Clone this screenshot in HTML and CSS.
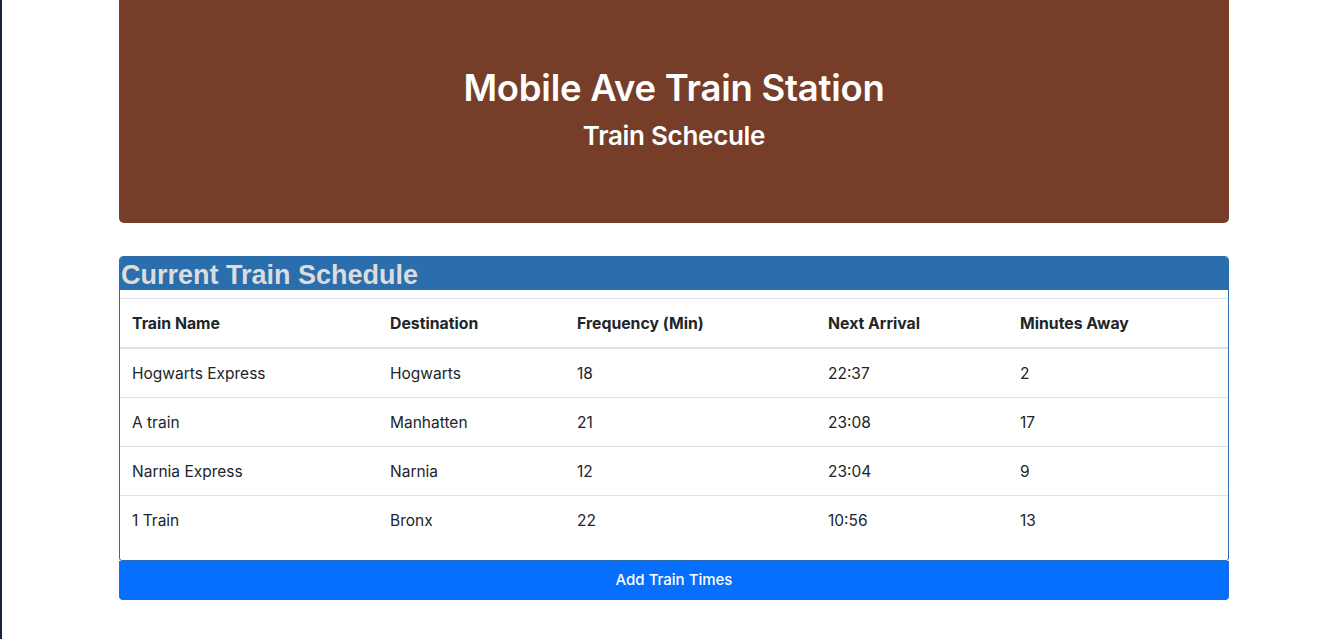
FILE: index.html
```html
<!DOCTYPE html>
<html lang="en">
<head>
<meta charset="utf-8">
<title>Mobile Ave Train Station</title>
<link rel="stylesheet" href="styles.css">
</head>
<body>
<div class="container">
  <header class="jumbotron">
    <h1 class="title">Mobile Ave Train Station</h1>
    <h4 class="subtitle">Train Schecule</h4>
  </header>

  <section class="card">
    <h3 class="card-header">Current Train Schedule</h3>
    <table class="table">
      <thead>
        <tr>
          <th class="c1">Train Name</th>
          <th class="c2">Destination</th>
          <th class="c3">Frequency (Min)</th>
          <th class="c4">Next Arrival</th>
          <th class="c5">Minutes Away</th>
        </tr>
      </thead>
      <tbody>
        <tr><td>Hogwarts Express</td><td>Hogwarts</td><td>18</td><td>22:37</td><td>2</td></tr>
        <tr><td>A train</td><td>Manhatten</td><td>21</td><td>23:08</td><td>17</td></tr>
        <tr><td>Narnia Express</td><td>Narnia</td><td>12</td><td>23:04</td><td>9</td></tr>
        <tr><td>1 Train</td><td>Bronx</td><td>22</td><td>10:56</td><td>13</td></tr>
      </tbody>
    </table>
  </section>
  <button class="btn-add" type="button">Add Train Times</button>
</div>
</body>
</html>
```

FILE: styles.css
```css
* { box-sizing: border-box; }

html, body {
  margin: 0;
  padding: 0;
  background: #ffffff;
}

body {
  border-left: 2px solid #172436;
  min-height: 639px;
  font-family: Inter, "Noto Sans", "Liberation Sans", sans-serif;
  color: #212529;
  font-size: 16px;
  line-height: 1.5;
}

.container {
  width: 1110px;
  margin-left: 117px;
}

.jumbotron {
  background: #763e29;
  border-radius: 0 0 5px 5px;
  height: 223px;
  padding-top: 64px;
  margin-bottom: 33px;
  text-align: center;
  color: #ffffff;
}

.title {
  margin: 0 0 8px;
  font-size: 36.5px;
  font-weight: 600;
  line-height: 48px;
  letter-spacing: -0.25px;
}

.subtitle {
  margin: 0;
  font-size: 26px;
  font-weight: 600;
  line-height: 32px;
  letter-spacing: -0.3px;
}

.card {
  border: 1px solid #2b6ead;
  border-radius: 4px 4px 3px 3px;
  overflow: hidden;
  background: #ffffff;
}

.card-header {
  margin: 0 0 8px;
  background: #2b6ead;
  color: #dcdcdc;
  font-family: "Liberation Sans", Arial, sans-serif;
  font-weight: 700;
  font-size: 27px;
  line-height: 32px;
  height: 33px;
  padding-top: 2px;
  padding-left: 1px;
}

.table {
  width: 100%;
  border-collapse: collapse;
  margin-bottom: 16px;
}

.table th,
.table td {
  text-align: left;
  padding: 13px 12px 11px;
  border-top: 1px solid #dee2e6;
  vertical-align: top;
  font-size: 15.5px;
  line-height: 24px;
}

.table th {
  font-weight: 700;
  font-size: 15.8px;
}

.table thead th {
  border-bottom: 2px solid #dee2e6;
}

.c1 { width: 258px; }
.c2 { width: 187px; }
.c3 { width: 251px; }
.c4 { width: 192px; }

.btn-add {
  display: block;
  width: 100%;
  height: 39px;
  margin: 0;
  padding-top: 1px;
  border: 1px solid #1f6ee0;
  border-top: none;
  border-radius: 0 0 4px 4px;
  background: #066ffd;
  color: #ffffff;
  font-family: Inter, "Noto Sans", "Liberation Sans", sans-serif;
  font-size: 15px;
  font-weight: 500;
  line-height: 24px;
  cursor: pointer;
}
```
